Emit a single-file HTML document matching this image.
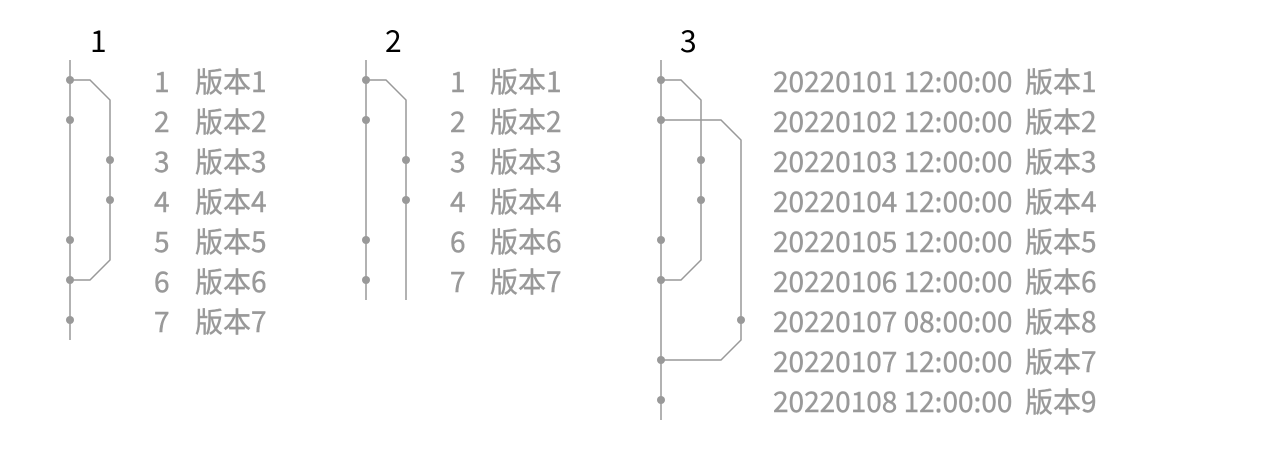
<!DOCTYPE html>
<html><head><meta charset="utf-8"><style>
html,body{margin:0;padding:0;background:#fff;width:1268px;height:456px;overflow:hidden}
svg text{font-family:"Noto Sans CJK SC","Liberation Sans",sans-serif;font-size:28px;fill:#999;stroke:#999;stroke-width:0.4}
svg text.h{fill:#000;stroke:none;font-size:30px}
</style></head><body>
<svg width="1268" height="456" xmlns="http://www.w3.org/2000/svg">
<g stroke="#999" stroke-width="1.5" fill="none">
<path d="M70 60V340"/>
<path d="M70 80H90L110 100V260L90 280H70"/>
<path d="M366 60V300"/>
<path d="M366 80H386L406 100V300"/>
<path d="M661 60V420"/>
<path d="M661 80H681L701 100V260L681 280H661"/>
<path d="M661 120H721L741 140V340L721 360H661"/>
</g>
<g fill="#999">
<circle cx="70" cy="80" r="4"/><circle cx="70" cy="120" r="4"/><circle cx="70" cy="240" r="4"/><circle cx="70" cy="280" r="4"/><circle cx="70" cy="320" r="4"/>
<circle cx="110" cy="160" r="4"/><circle cx="110" cy="200" r="4"/>
<circle cx="366" cy="80" r="4"/><circle cx="366" cy="120" r="4"/><circle cx="366" cy="240" r="4"/><circle cx="366" cy="280" r="4"/>
<circle cx="406" cy="160" r="4"/><circle cx="406" cy="200" r="4"/>
<circle cx="661" cy="80" r="4"/><circle cx="661" cy="120" r="4"/><circle cx="661" cy="240" r="4"/><circle cx="661" cy="280" r="4"/><circle cx="661" cy="360" r="4"/><circle cx="661" cy="400" r="4"/>
<circle cx="701" cy="160" r="4"/><circle cx="701" cy="200" r="4"/><circle cx="741" cy="320" r="4"/>
</g>
<text class="h" x="90" y="52">1</text>
<text class="h" x="385" y="52">2</text>
<text class="h" x="680" y="52">3</text>
<g>
<text x="154" y="92">1</text><text x="195" y="92">版本1</text>
<text x="154" y="132">2</text><text x="195" y="132">版本2</text>
<text x="154" y="172">3</text><text x="195" y="172">版本3</text>
<text x="154" y="212">4</text><text x="195" y="212">版本4</text>
<text x="154" y="252">5</text><text x="195" y="252">版本5</text>
<text x="154" y="292">6</text><text x="195" y="292">版本6</text>
<text x="154" y="332">7</text><text x="195" y="332">版本7</text>

<text x="450" y="92">1</text><text x="490" y="92">版本1</text>
<text x="450" y="132">2</text><text x="490" y="132">版本2</text>
<text x="450" y="172">3</text><text x="490" y="172">版本3</text>
<text x="450" y="212">4</text><text x="490" y="212">版本4</text>
<text x="450" y="252">6</text><text x="490" y="252">版本6</text>
<text x="450" y="292">7</text><text x="490" y="292">版本7</text>

<text x="773" y="92">20220101 12:00:00</text><text x="1025" y="92">版本1</text>
<text x="773" y="132">20220102 12:00:00</text><text x="1025" y="132">版本2</text>
<text x="773" y="172">20220103 12:00:00</text><text x="1025" y="172">版本3</text>
<text x="773" y="212">20220104 12:00:00</text><text x="1025" y="212">版本4</text>
<text x="773" y="252">20220105 12:00:00</text><text x="1025" y="252">版本5</text>
<text x="773" y="292">20220106 12:00:00</text><text x="1025" y="292">版本6</text>
<text x="773" y="332">20220107 08:00:00</text><text x="1025" y="332">版本8</text>
<text x="773" y="372">20220107 12:00:00</text><text x="1025" y="372">版本7</text>
<text x="773" y="412">20220108 12:00:00</text><text x="1025" y="412">版本9</text>
</g>
</svg>
</body></html>
